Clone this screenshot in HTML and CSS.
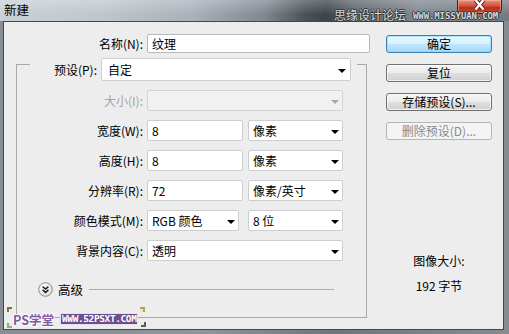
FILE: index.html
```html
<!DOCTYPE html>
<html lang="zh-CN">
<head>
<meta charset="utf-8">
<title>新建</title>
<link rel="stylesheet" href="styles.css">
</head>
<body>
<div class="window">
  <div class="titlebar">
    <span class="title">新建</span>
    <span class="site-mark"><span class="cn">思缘设计论坛</span><span class="en">WWW.MISSYUAN.COM</span></span>
    <span class="close">
      <svg width="15" height="10" viewBox="0 0 15 10"><path d="M3.5 0 L11.5 9.5 M11.5 0 L3.5 9.5" stroke="#5a1a10" stroke-width="4.2" fill="none"/><path d="M3.5 0 L11.5 9.5 M11.5 0 L3.5 9.5" stroke="#ffffff" stroke-width="2.4" fill="none"/></svg>
    </span>
  </div>
  <div class="frame">
    <div class="content">
      <div class="form">
        <div class="row name-row">
          <span class="label">名称(N):</span>
          <div class="field input w223">纹理</div>
        </div>
        <div class="group">
          <div class="group-head">
            <span class="label">预设(P):</span>
            <div class="field select w250 preset"><span>自定</span><span class="arrow"></span></div>
          </div>
          <div class="row">
            <span class="label off">大小(I):</span>
            <div class="fields"><div class="field select disabled w196"><span></span><span class="arrow"></span></div></div>
          </div>
          <div class="row">
            <span class="label">宽度(W):</span>
            <div class="fields"><div class="field input w96">8</div><div class="field select w95"><span>像素</span><span class="arrow"></span></div></div>
          </div>
          <div class="row">
            <span class="label">高度(H):</span>
            <div class="fields"><div class="field input w96">8</div><div class="field select w95"><span>像素</span><span class="arrow"></span></div></div>
          </div>
          <div class="row">
            <span class="label">分辨率(R):</span>
            <div class="fields"><div class="field input w96">72</div><div class="field select w95"><span>像素/英寸</span><span class="arrow"></span></div></div>
          </div>
          <div class="row">
            <span class="label">颜色模式(M):</span>
            <div class="fields wide-gap"><div class="field select w92"><span>RGB 颜色</span><span class="arrow"></span></div><div class="field select w95"><span>8 位</span><span class="arrow"></span></div></div>
          </div>
          <div class="row">
            <span class="label">背景内容(C):</span>
            <div class="fields"><div class="field select w196"><span>透明</span><span class="arrow"></span></div></div>
          </div>
          <div class="advanced">
            <svg class="adv-btn" width="15" height="15" viewBox="0 0 15 15">
              <defs><radialGradient id="g" cx="0.4" cy="0.35" r="0.7"><stop offset="0" stop-color="#ffffff"/><stop offset="1" stop-color="#dcdcdc"/></radialGradient></defs>
              <circle cx="7.5" cy="7.5" r="6.8" fill="url(#g)" stroke="#8c8c8c" stroke-width="1"/>
              <path d="M4.6 4.6 L7.5 7.1 L10.4 4.6 M4.6 7.9 L7.5 10.4 L10.4 7.9" stroke="#222" stroke-width="1.5" fill="none"/>
            </svg>
            <span class="adv-text">高级</span>
            <span class="adv-line"></span>
          </div>
        </div>
      </div>
      <div class="side">
        <div class="btn default">确定</div>
        <div class="btn">复位</div>
        <div class="btn">存储预设(S)...</div>
        <div class="btn disabled">删除预设(D)...</div>
        <div class="info">
          <div class="info-title">图像大小:</div>
          <div class="info-value">192 字节</div>
        </div>
      </div>
    </div>
  </div>
  <div class="wm-bottom">
    <span class="corner c-tl"></span>
    <span class="corner c-bl"></span>
    <span class="wm-ps">PS学堂</span>
    <span class="wm-url">WWW.52PSXT.COM</span>
    <span class="corner c-tr"></span>
    <span class="corner c-br"></span>
  </div>
</div>
</body>
</html>
```

FILE: styles.css
```css
* { box-sizing: border-box; }
html, body { margin: 0; padding: 0; }
body {
  width: 509px;
  height: 334px;
  overflow: hidden;
  font-family: "Noto Sans CJK SC", "Microsoft YaHei", sans-serif;
  font-size: 12px;
  color: #111;
}
.window {
  position: relative;
  width: 509px;
  height: 334px;
  display: flex;
  flex-direction: column;
  background: linear-gradient(to right, #868d94 0%, #8f969d 40%, #6f777e 65%, #858c92 100%);
}
.titlebar {
  height: 21px;
  flex: none;
  display: flex;
  align-items: flex-start;
  padding-left: 4px;
  background:
    linear-gradient(to bottom, rgba(255,255,255,0.25), rgba(255,255,255,0) 70%),
    linear-gradient(to right, #c9d0d6 0%, #bfc6cd 20%, #a8b0b8 38%, #7f878f 52%, #4a5259 60%, #3c434a 64%, #5d656c 70%, #7f878e 82%, #747c83 100%);
}
.title {
  line-height: 20px;
  font-size: 12.5px;
  color: #000;
}
.site-mark {
  position: absolute;
  left: 334px;
  top: 8px;
  display: flex;
  align-items: flex-end;
  gap: 7px;
  color: #d6d9dc;
  text-shadow: 1px 0 0 #30363b, -1px 0 0 #30363b, 0 1px 0 #30363b, 0 -1px 0 #30363b;
}
.site-mark .cn { font-size: 12px; line-height: 14px; }
.site-mark .en {
  font-family: "DejaVu Sans Mono", monospace;
  font-weight: bold;
  font-size: 9px;
  line-height: 11px;
  letter-spacing: -0.1px;
}
.close {
  margin-left: auto;
  margin-right: 7px;
  width: 45px;
  height: 14px;
  border: 1px solid #4c1a12;
  border-top: none;
  border-radius: 0 0 5px 5px;
  background: linear-gradient(to bottom, #e7937f 0%, #d0533b 45%, #b5301c 60%, #c84a2c 100%);
  box-shadow: inset 0 0 0 1px rgba(255, 190, 170, 0.5);
  display: flex;
  justify-content: center;
  align-items: flex-start;
}
.close svg { display: block; }
.frame {
  flex: 1;
  padding: 0 5px 4px 3px;
}
.content {
  height: 309px;
  border: 1px solid #40474d;
  background: #ededed;
  display: flex;
  padding-top: 12px;
}
.form {
  width: 354px;
  margin-left: 12px;
}
.row {
  display: grid;
  grid-template-columns: 126px auto;
  column-gap: 4px;
  align-items: center;
  margin-top: 9px;
}
.name-row {
  grid-template-columns: 127px 223px;
  margin-top: 0;
}
.label {
  text-align: right;
  white-space: nowrap;
  line-height: 16px;
  color: #000;
}
.label.off { color: #a3a3a3; }
.fields { display: flex; gap: 5px; }
.fields.wide-gap { gap: 9px; }
.field {
  height: 21px;
  background: #fff;
  border: 1px solid #cbcdcf;
  border-radius: 2px;
  line-height: 19px;
  padding: 0 4px 0 4px;
  white-space: nowrap;
  color: #000;
}
.name-row .field { height: 19px; line-height: 17px; border-color: #b4b9be; }
.select {
  display: flex;
  align-items: center;
  justify-content: space-between;
  padding-right: 3px;
}
.select span:first-child { line-height: 19px; }
.arrow {
  width: 0;
  height: 0;
  border-left: 4px solid transparent;
  border-right: 4px solid transparent;
  border-top: 4px solid #000;
  margin-top: 2px;
}
.select.disabled { background: #f1f1f1; border-color: #d3d3d3; }
.select.disabled .arrow { border-top-color: #a8a8a8; }
.w223 { width: 223px; }
.w250 { width: 250px; }
.w196 { width: 196px; }
.w96 { width: 96px; }
.w95 { width: 95px; }
.w92 { width: 92px; }
.preset { height: 23px; padding-left: 6px; padding-right: 4px; }
.group {
  width: 351px;
  margin-top: 11px;
  border: 1px solid #a9a9a9;
  padding-bottom: 20px;
}
.group-head {
  margin: -7px 9px 0 13px;
  background: #ededed;
  display: flex;
  justify-content: flex-end;
  align-items: center;
  gap: 4px;
  padding-right: 6px;
}
.advanced {
  margin-top: 21px;
  height: 15px;
  display: flex;
  align-items: center;
  padding-left: 21px;
  padding-right: 32px;
}
.adv-btn { display: block; flex: none; }
.adv-text { margin-left: 5px; font-size: 12.5px; line-height: 15px; color: #000; }
.adv-line {
  flex: 1;
  height: 1px;
  background: #adadad;
  margin-left: 6px;
}
.side {
  width: 106px;
  margin-left: 16px;
  display: flex;
  flex-direction: column;
  gap: 11px;
  padding-top: 1px;
}
.btn {
  height: 18px;
  border: 1px solid #707070;
  border-radius: 3px;
  background: linear-gradient(to bottom, #f4f4f4 0%, #ececec 48%, #dedede 52%, #d0d0d0 100%);
  box-shadow: inset 0 0 0 1px rgba(255,255,255,0.7);
  text-align: center;
  line-height: 16px;
  color: #000;
}
.btn.default {
  border-color: #3c7fb1;
  background: linear-gradient(to bottom, #eaf6fd 0%, #d9f0fc 48%, #bee6fd 52%, #a7d9f5 100%);
  box-shadow: inset 0 0 0 1px rgba(120, 220, 255, 0.6);
}
.btn.disabled {
  border-color: #b2b6b9;
  background: #f4f4f4;
  box-shadow: none;
  color: #8a8a8a;
}
.info {
  margin-top: 102px;
  text-align: center;
  line-height: 16px;
  color: #000;
}
.info-value { margin-top: 9px; }
.wm-bottom {
  position: absolute;
  left: 6px;
  top: 306px;
  width: 141px;
  height: 24px;
  display: flex;
  align-items: center;
  padding-left: 7px;
}
.wm-ps {
  font-size: 12.5px;
  font-weight: bold;
  color: #7e59a3;
  line-height: 13px;
  text-shadow: 1px 0 0 #fff, -1px 0 0 #fff, 0 1px 0 #fff, 0 -1px 0 #fff;
  margin-top: 2px;
}
.wm-url {
  margin-left: 6px;
  margin-top: 2px;
  background: #6c4f8e;
  border: 1px solid #e8e0f0;
  color: #fff;
  font-family: "DejaVu Sans Mono", monospace;
  font-weight: bold;
  font-size: 9.5px;
  line-height: 10px;
  padding: 0 1px;
  letter-spacing: -0.4px;
}
.corner {
  position: absolute;
  width: 5px;
  height: 5px;
  border: 2px solid #8a6a4a;
  background: #f0e8d0;
}
.c-tl { left: 1px; top: 1px; border-right: none; border-bottom: none; }
.c-bl { left: 1px; top: 17px; border-color: #8fb07a; border-right: none; border-top: none; }
.c-tr { left: 134px; top: 1px; border-color: #b5a73a; border-left: none; border-bottom: none; }
.c-br { left: 135px; top: 16px; border-color: #5a5a6a; border-left: none; border-top: none; }
```
